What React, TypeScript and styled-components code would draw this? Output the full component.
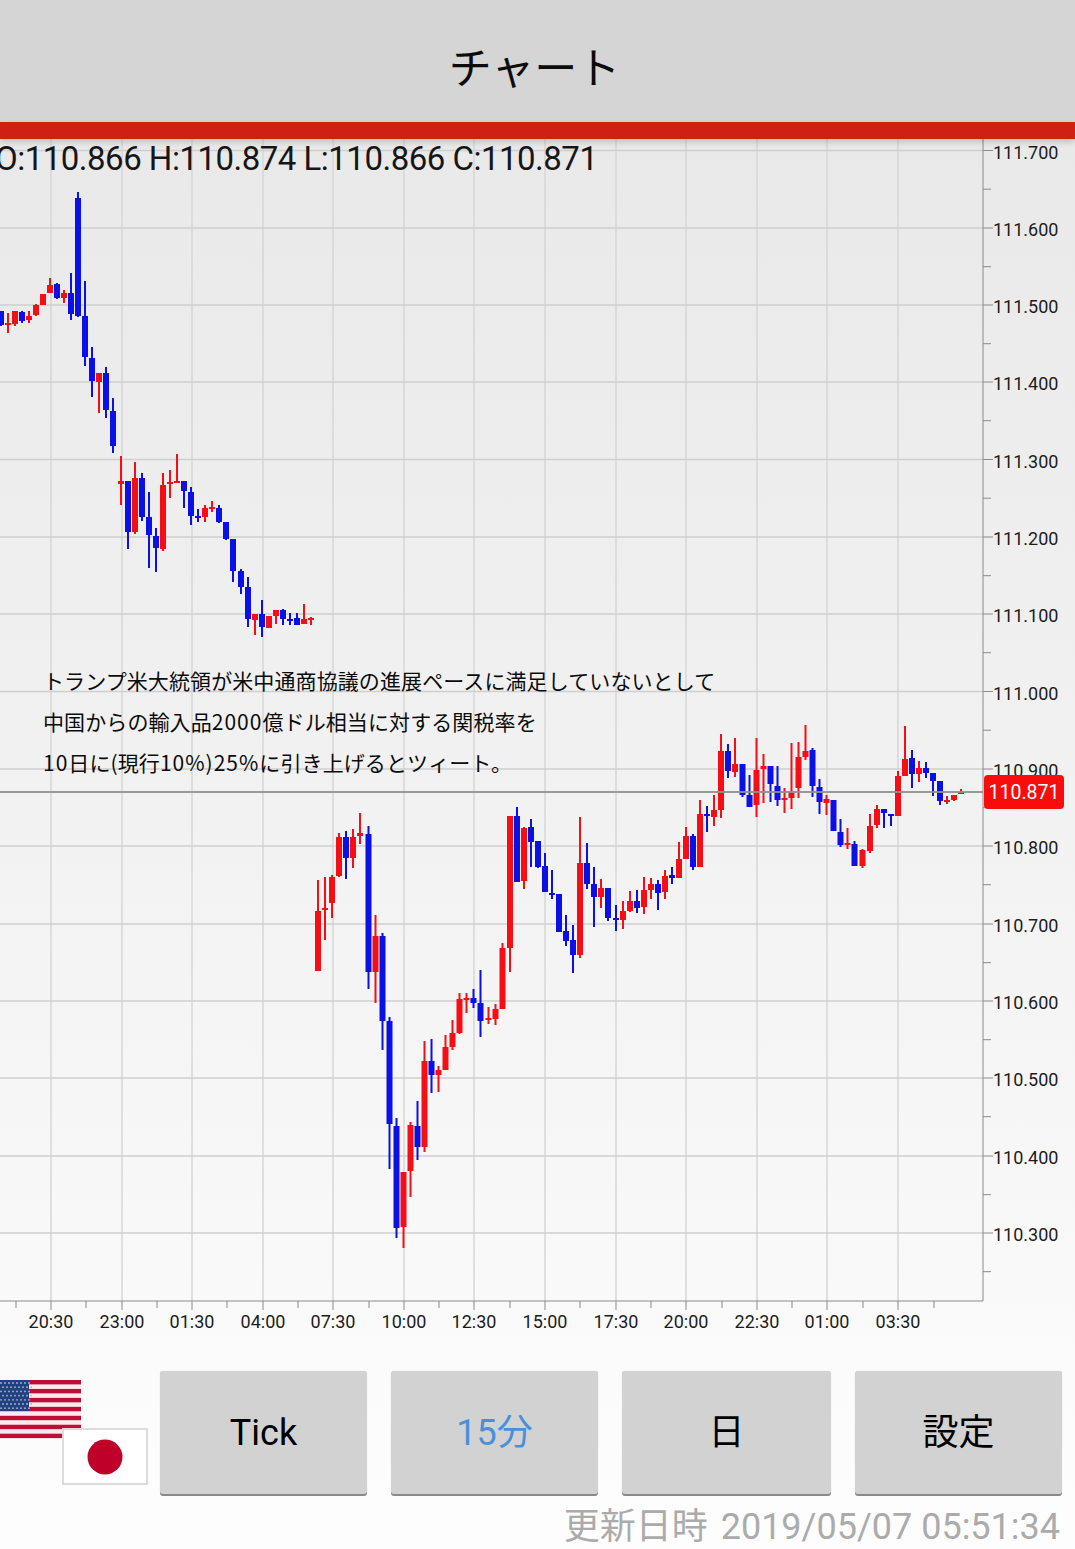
import React from "react";
import styled, { createGlobalStyle } from "styled-components";

const GlobalStyle = createGlobalStyle`
  html, body { margin: 0; padding: 0; background: #fdfdfd; }
  body { font-family: Roboto, "Noto Sans CJK JP", sans-serif; }
`;

const Page = styled.div`
  width: 1075px;
  height: 1549px;
  overflow: hidden;
  display: flex;
  flex-direction: column;
  background: linear-gradient(180deg, #d5d5d5 0, #d5d5d5 122px, #e9e9e9 139px, #efefef 600px, #f6f6f6 1100px, #fdfdfd 1500px);
`;

const Header = styled.header`
  height: 122px;
  flex: none;
  background: #d5d5d5;
  display: flex;
  align-items: center;
  justify-content: center;
  font-family: "Noto Sans CJK JP", sans-serif;
  font-size: 43px;
  color: #0c0c0c;
  padding: 8px 6px 0 0;
  box-sizing: border-box;
`;

const RedBar = styled.div`
  height: 17px;
  flex: none;
  background: #cf2016;
  box-shadow: 0 3px 6px rgba(0, 0, 0, 0.18);
  position: relative;
  z-index: 1;
`;

const ChartArea = styled.section`
  position: relative;
  height: 1211px;
  flex: none;
`;

const ChartSvg = styled.svg`
  display: block;
  font-family: Roboto, sans-serif;
`;

const Legend = styled.div`
  position: absolute;
  left: -5px;
  top: 0;
  font-size: 33px;
  letter-spacing: -0.5px;
  line-height: 40px;
  color: #161616;
  white-space: nowrap;
`;

const Note = styled.div`
  position: absolute;
  left: 43px;
  top: 521px;
  font-family: "Noto Sans CJK JP", sans-serif;
  font-size: 21px;
  letter-spacing: 0.1px;
  line-height: 41px;
  color: #0c0c0c;
  white-space: nowrap;
`;

const Wide = styled.span`
  letter-spacing: 1px;
`;

const Controls = styled.div`
  display: flex;
  align-items: flex-start;
  height: 125px;
  flex: none;
  padding-top: 21px;
  gap: 12px;
`;

const Flags = styled.svg`
  display: block;
  flex: none;
  margin-top: 9px;
`;

const Buttons = styled.div`
  display: flex;
  gap: 24px;
`;

const Button = styled.div<{ $active?: boolean; $w: number }>`
  width: ${(p) => p.$w}px;
  height: 123px;
  background: #d2d2d2;
  border-radius: 3px;
  box-shadow: 0 2px 0 #8a8a8a, 0 0 1px rgba(0, 0, 0, 0.2);
  display: flex;
  align-items: center;
  justify-content: center;
  font-size: 36px;
  line-height: 1;
  color: ${(p) => (p.$active ? "#4a90d9" : "#000")};
`;

const Updated = styled.div`
  flex: none;
  margin-top: 9px;
  padding-right: 15px;
  text-align: right;
  font-size: 36px;
  line-height: 44px;
  color: #ababab;
  white-space: pre;
`;

const UpdatedLabel = styled.span`
  margin-right: 4px;
`;

type Candle = [number, number, number, number, number, 0 | 1];
// x, wick top, wick bottom, body top, body bottom, colour (0 red, 1 blue)
const candles: Candle[] = [
  [1,311,326,311,325,1],[8,313,333,323,325,0],[15,311,326,311,324,0],[22,311,323,312,321,1],[29,311,323,316,320,0],[36,304,316,305,315,0],[43,294,305,294,305,0],[50,278,293,285,293,0],[57,283,299,284,298,1],[64,290,303,293,298,0],[71,273,320,293,314,1],[78,192,317,198,316,1],[85,281,366,316,357,1],[92,347,397,358,381,1],[99,373,413,373,382,0],[106,367,418,373,410,1],[113,398,453,411,446,1],
  [121,456,505,481,484,0],[128,481,549,481,532,1],[135,462,534,478,532,0],[142,473,521,478,517,1],[149,492,568,517,535,1],[156,528,572,536,548,1],[163,473,551,485,549,0],[170,470,498,482,484,0],[177,454,483,481,483,0],[184,481,508,481,491,1],[191,487,525,492,516,1],[198,509,522,516,518,1],[205,505,522,508,517,0],[212,501,512,507,509,0],[219,505,523,508,522,1],[226,522,540,522,539,1],[233,539,582,539,571,1],[241,569,594,571,587,1],[248,577,627,587,619,1],[255,614,635,614,620,0],[262,600,637,614,627,1],[269,616,628,616,628,0],[276,610,624,610,616,0],[283,609,625,610,619,1],[290,613,625,619,621,1],[297,613,625,618,625,1],[304,604,624,619,624,0],[311,617,625,618,620,0],
  [318,880,971,911,971,0],[325,877,940,908,910,0],[332,875,918,877,903,0],[339,833,877,837,876,0],[346,831,879,837,858,1],[353,829,868,837,858,0],[360,813,844,833,836,0],[368.5,826,989,834,972,1],[375.5,915,1003,936,972,0],[382.5,933,1050,936,1021,1],[389.5,1017,1169,1021,1124,1],[396.5,1118,1238,1126,1228,1],[403.5,1172,1248,1172,1227,0],[410.5,1122,1197,1125,1171,0],[417.5,1101,1160,1126,1147,1],[424.5,1041,1152,1061,1147,0],[431.5,1039,1093,1061,1075,1],[438.5,1066,1092,1070,1075,0],[445.5,1035,1070,1047,1070,0],[452.5,1020,1050,1033,1047,0],[459.5,993,1034,999,1033,0],[466.5,993,1013,998,1000,0],[473.5,989,1008,998,1003,1],[480.5,970,1037,1003,1021,1],[488.5,1007,1024,1018,1020,0],[495.5,1004,1025,1009,1019,0],[502.5,943,1009,948,1009,0],[510,816,972,816,948,0],[517,807,882,816,882,1],[524,827,889,828,881,0],
  [531,819,867,827,842,1],[538,841,868,841,867,1],[545,853,892,866,892,1],[552,870,899,893,895,1],[559,894,932,894,932,1],[566,915,946,931,941,1],[573,925,973,940,955,1],[580,817,958,863,955,0],[587,843,889,863,884,1],[594,867,927,884,897,1],[601,879,908,888,897,0],[608,888,921,888,918,1],[616,905,931,918,920,1],[623,901,929,911,920,0],[630,891,912,901,911,0],[637,890,913,901,908,1],[644,877,914,890,907,0],[651,878,899,884,890,0],[658,880,910,884,893,1],[665,870,899,876,892,0],[672,867,884,875,878,1],[679,842,878,859,878,0],[686,827,859,836,859,0],[693,834,870,836,867,1],[700,800,867,814,867,0],[707,806,832,814,816,1],[714,795,826,810,817,0],
  [721,734,818,751,810,0],[728,744,778,751,771,1],[735,738,777,764,772,0],[742.5,764,797,764,795,1],[749.5,775,807,795,807,1],[756.5,738,817,770,805,0],[763.5,754,803,766,769,0],[770.5,766,802,766,784,1],[777.5,766,806,786,800,1],[784.5,788,813,798,800,0],[791.5,743,809,793,798,0],[798.5,742,798,757,788,0],[805.5,725,760,751,757,0],[812.5,748,797,750,786,1],[819.5,779,814,787,802,1],[826.5,795,815,799,803,0],[833.5,800,831,800,831,1],[840.5,819,847,832,845,1],[847.5,828,849,843,845,0],[854.5,841,866,844,866,1],[862.5,849,868,850,866,0],[870,814,853,826,851,0],[877,805,828,809,825,0],[884,809,828,809,813,1],[891,814,826,814,816,1],[898,771,816,776,816,0],[905,726,776,759,776,0],[912,750,788,758,774,1],[919,761,782,768,774,0],[926,762,778,768,773,1],[933,773,796,773,781,1],[940,781,805,781,801,1],[947,796,804,800,802,0],[954,795,801,795,800,0],[961,789,794,792,794,0],
];

const OFF = 139; // chart svg starts below the red bar
const yMajor: [number, string][] = [
  [150.5,"111.700"],[228,"111.600"],[305,"111.500"],[382,"111.400"],[459.5,"111.300"],[537,"111.200"],[614,"111.100"],[691.5,"111.000"],[769,"110.900"],[846,"110.800"],[924,"110.700"],[1001,"110.600"],[1078,"110.500"],[1156,"110.400"],[1233,"110.300"],
];
const xMajor: [number, string][] = [
  [51,"20:30"],[122,"23:00"],[192,"01:30"],[263,"04:00"],[333,"07:30"],[404,"10:00"],[474,"12:30"],[545,"15:00"],[616,"17:30"],[686,"20:00"],[757,"22:30"],[827,"01:00"],[898,"03:30"],
];
const xMinor = [16, 86, 157, 227, 298, 369, 439, 510, 580, 651, 722, 792, 863, 934];
const AXIS_X = 983;
const AXIS_Y = 1301;

const Chart = () => (
  <ChartSvg width={1075} height={1211} viewBox={`0 ${OFF} 1075 1211`}>
    {xMajor.map(([x]) => (
      <line key={x} x1={x} x2={x} y1={OFF} y2={AXIS_Y} stroke="#d4d4d4" strokeWidth={1.4} />
    ))}
    {yMajor.map(([y]) => (
      <line key={y} x1={0} x2={AXIS_X} y1={y} y2={y} stroke="#cfcfcf" strokeWidth={1.4} />
    ))}
    {candles.map(([x, wt, wb, bt, bb, c], i) => {
      const col = c ? "#0a10e6" : "#f50f14";
      return (
        <g key={i} fill={col}>
          <rect x={x - 1} y={wt} width={2} height={wb - wt} />
          <rect x={x - 3} y={bt} width={6} height={Math.max(bb - bt, 2)} />
        </g>
      );
    })}
    <line x1={0} x2={AXIS_X} y1={792} y2={792} stroke="#8f8f8f" strokeOpacity={0.9} strokeWidth={2} />
    <line x1={AXIS_X} x2={AXIS_X} y1={OFF} y2={AXIS_Y} stroke="#8a8a8a" strokeWidth={1} />
    <line x1={0} x2={AXIS_X} y1={AXIS_Y} y2={AXIS_Y} stroke="#8a8a8a" strokeWidth={1} />
    {yMajor.map(([y, t]) => (
      <g key={t}>
        <line x1={AXIS_X} x2={993} y1={y} y2={y} stroke="#8a8a8a" />
        <line x1={AXIS_X} x2={991} y1={y + 38.7} y2={y + 38.7} stroke="#8a8a8a" />
        <text x={993} y={y + 8} fontSize={18} fill="#1c1c1c">{t}</text>
      </g>
    ))}
    {xMajor.map(([x, t]) => (
      <g key={t + x}>
        <line x1={x} x2={x} y1={AXIS_Y} y2={1310} stroke="#8a8a8a" />
        <text x={x} y={1328} fontSize={18} fill="#1c1c1c" textAnchor="middle">{t}</text>
      </g>
    ))}
    {xMinor.map((x) => (
      <line key={x} x1={x} x2={x} y1={AXIS_Y} y2={1308} stroke="#8a8a8a" />
    ))}
    <rect x={984} y={775} width={80} height={34} rx={4} fill="#f80d0d" />
    <text x={1024} y={799} fontSize={19.5} fill="#fff" textAnchor="middle">110.871</text>
  </ChartSvg>
);

const stripes = Array.from({ length: 7 }, (_, i) => i);
const starDots: [number, number][] = [];
for (let r = 0; r < 7; r++) for (let c = 0; c < 8; c++) starDots.push([1 + c * 4 + (r % 2) * 2, 3 + r * 4.2]);

const FlagPair = () => (
  <Flags width={148} height={105} viewBox="0 0 148 105">
    <rect x={0} y={0} width={81} height={58} fill="#fbe9ec" />
    {stripes.map((i) => (
      <rect key={i} x={0} y={i * 8.95} width={81} height={4.4} fill="#bd0f35" />
    ))}
    <rect x={0} y={0} width={29} height={31} fill="#24417f" />
    {starDots.map(([x, y], i) => (
      <circle key={i} cx={x} cy={y} r={0.9} fill="#a9b6d2" />
    ))}
    <rect x={63} y={49} width={84} height={55} fill="#fff" stroke="#dcdcdc" strokeWidth={2} />
    <circle cx={105} cy={77} r={17.5} fill="#bf0028" />
  </Flags>
);

export default function App() {
  return (
    <Page>
      <GlobalStyle />
      <Header>チャート</Header>
      <RedBar />
      <ChartArea>
        <Chart />
        <Legend>O:110.866 H:110.874 L:110.866 C:110.871</Legend>
        <Note>
          <div>トランプ米大統領が米中通商協議の進展ペースに満足していないとして</div>
          <div>中国からの輸入品<Wide>2000</Wide>億ドル相当に対する関税率を</div>
          <div><Wide>10</Wide>日に(現行<Wide>10%)25%</Wide>に引き上げるとツィート。</div>
        </Note>
      </ChartArea>
      <Controls>
        <FlagPair />
        <Buttons>
          <Button $w={207}>Tick</Button>
          <Button $w={207} $active>15分</Button>
          <Button $w={209}>日</Button>
          <Button $w={207}>設定</Button>
        </Buttons>
      </Controls>
      <Updated><UpdatedLabel>更新日時</UpdatedLabel> 2019/05/07 05:51:34</Updated>
    </Page>
  );
}
